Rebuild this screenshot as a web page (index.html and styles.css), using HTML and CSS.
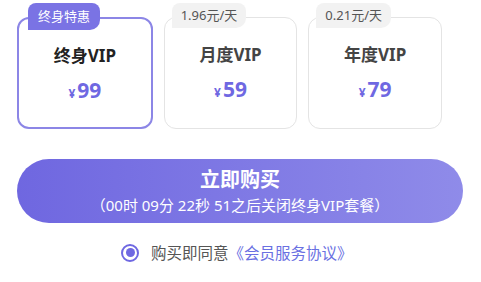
FILE: index.html
```html
<!DOCTYPE html>
<html lang="zh-CN">

<head>
    <meta charset="UTF-8">
    <title>开通会员</title>
    <link rel="stylesheet" href="styles.css">
</head>

<body>
    <div class="page">
        <div class="plans">
            <div class="plan active">
                <span class="tag tag-hot">终身特惠</span>
                <div class="plan-name">终身VIP</div>
                <div class="plan-price"><span class="yen">¥</span>99</div>
            </div>
            <div class="plan">
                <span class="tag">1.96元/天</span>
                <div class="plan-name">月度VIP</div>
                <div class="plan-price"><span class="yen">¥</span>59</div>
            </div>
            <div class="plan">
                <span class="tag">0.21元/天</span>
                <div class="plan-name">年度VIP</div>
                <div class="plan-price"><span class="yen">¥</span>79</div>
            </div>
        </div>

        <button class="buy-btn">
            <span class="buy-title">立即购买</span>
            <span class="buy-sub">（00时 09分 22秒 51之后关闭终身VIP套餐）</span>
        </button>

        <div class="agree">
            <span class="radio"></span>
            <span class="agree-text">购买即同意</span>
            <a class="agree-link" href="#">《会员服务协议》</a>
        </div>
    </div>
</body>

</html>
```

FILE: styles.css
```css
:root {
    --purple: #6f68e2;
    --text-dark: #333333;
    --text-gray: #555555;
}

body {
    margin: 0;
    background-color: #ffffff;
    font-family: "Noto Sans", "Noto Sans CJK SC", sans-serif;
}

.page {
    width: 481px;
    height: 282px;
    padding: 17px 18px 0 17px;
    box-sizing: border-box;
}

.plans {
    display: flex;
    gap: 11px;
    width: 425px;
}

.plan {
    position: relative;
    width: 134px;
    height: 112px;
    box-sizing: border-box;
    border: 1.5px solid #e4e4e4;
    border-radius: 12px;
    display: flex;
    flex-direction: column;
    align-items: center;
    padding-top: 25px;
}

.plan.active {
    width: 136px;
    border: 2px solid #8c86e6;
}

.tag {
    position: absolute;
    top: -15.5px;
    left: 7px;
    height: 25px;
    line-height: 25px;
    padding: 0 9px;
    font-size: 13px;
    color: var(--text-gray);
    background-color: #f2f2f2;
    border-radius: 8px 8px 10px 0;
}

.tag-hot {
    top: -16px;
    left: 9px;
    height: 27px;
    line-height: 27px;
    color: #ffffff;
    background-color: #7a73e4;
    padding: 0 10px;
}

.plan-name {
    font-size: 17px;
    font-weight: bold;
    line-height: 24px;
    color: #444444;
}

.plan.active .plan-name {
    color: #222222;
}

.plan-price {
    margin-top: 9px;
    font-size: 21px;
    font-weight: bold;
    color: var(--purple);
    line-height: 26px;
}

.yen {
    font-size: 12px;
    margin-right: 2px;
}

.buy-btn {
    display: flex;
    flex-direction: column;
    align-items: center;
    width: 446px;
    height: 64px;
    margin-top: 30px;
    border: none;
    border-radius: 32px;
    background: linear-gradient(90deg, #6f67e0, #8f8be9);
    color: #ffffff;
    font-family: inherit;
    padding: 7px 0 0;
    cursor: pointer;
}

.buy-title {
    font-size: 20px;
    font-weight: bold;
    line-height: 28px;
}

.buy-sub {
    font-size: 15px;
    line-height: 22px;
}

.agree {
    display: flex;
    align-items: center;
    margin-top: 18px;
    padding-left: 104px;
    font-size: 15.5px;
}

.radio {
    width: 14px;
    height: 14px;
    border: 2px solid var(--purple);
    border-radius: 50%;
    display: flex;
    align-items: center;
    justify-content: center;
    margin-right: 12px;
}

.radio::after {
    content: '';
    width: 9px;
    height: 9px;
    border-radius: 50%;
    background-color: var(--purple);
}

.agree-text {
    color: var(--text-gray);
}

.agree-link {
    color: #6a70e2;
    text-decoration: none;
}
```
